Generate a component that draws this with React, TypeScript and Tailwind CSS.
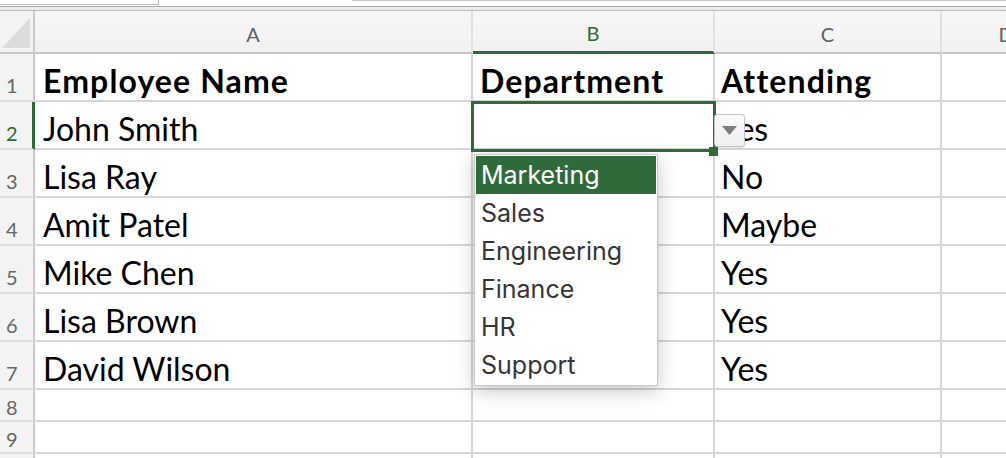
import { Fragment } from "react";

const rows: Array<[string, string, string]> = [
  ["Employee Name", "Department", "Attending"],
  ["John Smith", "", "Yes"],
  ["Lisa Ray", "", "No"],
  ["Amit Patel", "", "Maybe"],
  ["Mike Chen", "", "Yes"],
  ["Lisa Brown", "", "Yes"],
  ["David Wilson", "", "Yes"],
];

const options = ["Marketing", "Sales", "Engineering", "Finance", "HR", "Support"];

const cellFont = { fontFamily: "Lato, 'Open Sans', sans-serif" };

function RowHeader({ n, tall, active }: { n?: number; tall: boolean; active?: boolean }) {
  return (
    <div
      className={`flex w-[35px] shrink-0 items-end border-b-2 border-b-[#dedede] bg-[#f3f3f3] pl-[6px] text-[20px] leading-none ${
        active ? "border-r-[3px] border-r-[#2f6b3a] text-[#2f6b3a]" : "border-r-2 border-r-[#c9c9c9] text-[#666]"
      } ${tall ? "pb-[5px]" : "pb-[3px]"}`}
      style={cellFont}
    >
      {n}
    </div>
  );
}

function Dropdown() {
  return (
    <>
      {/* selection frame */}
      <div className="pointer-events-none absolute left-[-2px] top-[-1px] z-10 h-[51px] w-[245px] border-[3px] border-[#2f6b3a]" />
      <div className="absolute left-[236px] top-[45px] z-20 size-[9px] bg-[#2f6b3a]" />

      {/* arrow button */}
      <div className="absolute left-[241px] top-[12px] z-20 flex h-[33px] w-[31px] items-center justify-center rounded-[3px] border border-[#c4c4c4] bg-gradient-to-b from-[#fafafa] to-[#efefef] shadow-[0_1px_2px_rgba(0,0,0,0.12)]">
        <svg width="15" height="9" viewBox="0 0 15 9">
          <path d="M0 0h15L7.5 9z" fill="#7d7d7d" />
        </svg>
      </div>

      {/* list */}
      <div
        className="absolute left-[1px] top-[52px] z-20 w-[184px] border border-[#c6c6c6] bg-white p-px shadow-[0_5px_18px_rgba(0,0,0,0.22)]"
        style={{ fontFamily: "Inter, 'Liberation Sans', sans-serif" }}
      >
        {options.map((o, i) => (
          <div
            key={o}
            className={`flex h-[38px] items-center pl-[5px] text-[25px] ${
              i === 0 ? "bg-[#2f6b3a] text-white" : "text-[#363636]"
            }`}
          >
            {o}
          </div>
        ))}
      </div>
    </>
  );
}

export default function App() {
  const colHeaders = [
    { label: "A", w: "w-[438px]" },
    { label: "B", w: "w-[242px]", active: true },
    { label: "C", w: "w-[227px]" },
    { label: "D", w: "w-[130px]" },
  ];

  return (
    <div className="relative h-[458px] w-[1006px] overflow-hidden bg-white">
      {/* toolbar remnant */}
      <div className="flex h-[6px]">
        <div className="h-[5px] w-[159px] border-b border-r border-[#b8b8b8]" />
        <div className="ml-auto mt-0 h-[1px] w-[654px] border-b border-l border-[#c8c8c8]" />
      </div>
      <div className="h-[5px] border-y border-t-[#a8a8a8] border-b-[#b9b9b9] bg-[#ededed]" />

      {/* column headers */}
      <div className="flex h-[43px]">
        <div className="relative w-[35px] shrink-0 border-b-2 border-r-2 border-[#c9c9c9] bg-[#f3f3f3]">
          <svg className="absolute left-0 top-0" width="33" height="41" viewBox="0 0 33 41">
            <path d="M2 37H30V7z" fill="#dcdcdc" />
          </svg>
        </div>
        {colHeaders.map((c) => (
          <div
            key={c.label}
            className={`flex shrink-0 items-center justify-center border-r-2 border-r-[#e1e1e1] bg-gradient-to-b from-[#f7f7f7] to-[#f1f1f1] pt-[4px] text-[20px] ${c.w} ${
              c.active ? "border-b-[3px] border-b-[#2f6b3a] text-[#2f6b3a]" : "border-b-2 border-b-[#c6c6c6] text-[#606060]"
            }`}
            style={cellFont}
          >
            {c.label}
          </div>
        ))}
      </div>

      {/* data rows */}
      {rows.map((r, i) => (
        <div key={i} className="flex h-[48px]">
          <RowHeader n={i + 1} tall active={i === 1} />
          {r.map((v, j) => (
            <Fragment key={j}>
              <div
                className={`relative flex shrink-0 items-end border-b-2 border-r-2 border-[#d6d6d6] pb-[3px] text-[32px] leading-none text-black ${
                  ["w-[438px] pl-[8px]", "w-[242px] pl-[7px]", "w-[227px] pl-[6px]"][j]
                } ${i === 0 ? "font-bold tracking-[0.035em]" : ""}`}
                style={cellFont}
              >
                {v}
                {i === 1 && j === 1 && <Dropdown />}
              </div>
            </Fragment>
          ))}
          <div className="w-[130px] shrink-0 border-b-2 border-[#d6d6d6]" />
        </div>
      ))}

      {[8, 9, undefined].map((n, k) => (
        <div key={k} className="flex h-[32px]">
          <RowHeader n={n} tall={false} />
          <div className="w-[438px] shrink-0 border-b-2 border-r-2 border-[#d6d6d6]" />
          <div className="w-[242px] shrink-0 border-b-2 border-r-2 border-[#d6d6d6]" />
          <div className="w-[227px] shrink-0 border-b-2 border-r-2 border-[#d6d6d6]" />
          <div className="w-[130px] shrink-0 border-b-2 border-[#d6d6d6]" />
        </div>
      ))}
    </div>
  );
}
